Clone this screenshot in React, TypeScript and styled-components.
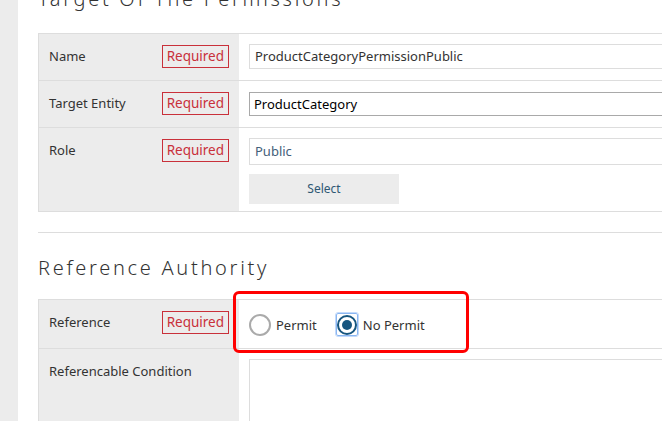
import styled, { createGlobalStyle } from "styled-components";

const GlobalStyle = createGlobalStyle`
  html, body {
    margin: 0;
    padding: 0;
    background: #ffffff;
    font-family: "Noto Sans", "Open Sans", sans-serif;
    color: #333333;
  }
  * {
    box-sizing: border-box;
  }
`;

type Field = {
  label: string;
  required?: boolean;
};

function App() {
  return (
    <>
      <GlobalStyle />
      <Page>
        <Sidebar />
        <Main>
          <SectionTitle $first>Target Of The Permissions</SectionTitle>
          <FormTable>
            <FormRow>
              <LabelCell label="Name" required />
              <ValueCell>
                <TextInput>ProductCategoryPermissionPublic</TextInput>
              </ValueCell>
            </FormRow>
            <FormRow>
              <LabelCell label="Target Entity" required />
              <ValueCell>
                <TextInput $variant="select">ProductCategory</TextInput>
              </ValueCell>
            </FormRow>
            <FormRow $last>
              <LabelCell label="Role" required />
              <ValueCell $tight>
                <TextInput $variant="readonly">Public</TextInput>
                <SelectButton>Select</SelectButton>
              </ValueCell>
            </FormRow>
          </FormTable>

          <Divider />

          <SectionTitle>Reference Authority</SectionTitle>
          <FormTable>
            <FormRow>
              <LabelCell label="Reference" required />
              <ValueCell>
                <RadioGroup>
                  <RadioOption>
                    <Radio />
                    Permit
                  </RadioOption>
                  <RadioOption>
                    <Focus>
                      <Radio $checked />
                    </Focus>
                    No Permit
                  </RadioOption>
                </RadioGroup>
                <Highlight />
              </ValueCell>
            </FormRow>
            <FormRow $last>
              <LabelCell label="Referencable Condition" />
              <ValueCell>
                <TextArea />
              </ValueCell>
            </FormRow>
          </FormTable>
        </Main>
      </Page>
    </>
  );
}

function LabelCell({ label, required }: Field) {
  return (
    <Label>
      <span>{label}</span>
      {required && <RequiredBadge>Required</RequiredBadge>}
    </Label>
  );
}

export default App;

const Page = styled.div`
  display: flex;
  width: 662px;
  height: 421px;
  overflow: hidden;
`;

const Sidebar = styled.div`
  flex: 0 0 18px;
  background: #ececec;
`;

const Main = styled.div`
  flex: 1;
  padding-left: 20px;
  overflow: hidden;
`;

const SectionTitle = styled.h2<{ $first?: boolean }>`
  margin: ${(p) => (p.$first ? "-13px 0 22px" : "23px 0 19px")};
  font-size: 20px;
  line-height: 24px;
  font-weight: 300;
  letter-spacing: 2.7px;
  color: #333333;
  white-space: nowrap;
`;

const FormTable = styled.div`
  width: 700px;
  border: 1px solid #dddddd;
  border-right: none;
`;

const FormRow = styled.div<{ $last?: boolean }>`
  display: grid;
  grid-template-columns: 200px 1fr;
  border-bottom: ${(p) => (p.$last ? "none" : "1px solid #dddddd")};
`;

const Label = styled.div`
  display: flex;
  justify-content: space-between;
  align-items: flex-start;
  background: #ececec;
  padding: 10px 10px 11px 10px;
  font-size: 13px;
  line-height: 25px;
  color: #333333;
`;

const RequiredBadge = styled.span`
  margin-top: 1px;
  height: 23px;
  padding: 0 4px;
  border: 1px solid #c9303a;
  color: #c9303a;
  font-size: 13.5px;
  line-height: 21px;
`;

const ValueCell = styled.div<{ $tight?: boolean }>`
  position: relative;
  display: flex;
  flex-direction: column;
  align-items: flex-start;
  gap: 9px;
  padding: 10px 10px ${(p) => (p.$tight ? "7px" : "8px")} 10px;
`;

const TextInput = styled.div<{ $variant?: "select" | "readonly" }>`
  width: 100%;
  height: ${(p) => (p.$variant === "readonly" ? "27px" : p.$variant === "select" ? "24px" : "25px")};
  margin-top: ${(p) => (p.$variant === "select" ? "1px" : "0")};
  border: 1px solid ${(p) => (p.$variant === "select" ? "#a9a9a9" : "#dddddd")};
  padding: 0 ${(p) => (p.$variant === "select" ? "4px" : "5px")};
  font-size: 13px;
  line-height: ${(p) => (p.$variant === "readonly" ? "25px" : p.$variant === "select" ? "22px" : "23px")};
  color: ${(p) => (p.$variant === "select" ? "#000000" : p.$variant === "readonly" ? "#43607a" : "#333333")};
  background: #ffffff;
`;

const SelectButton = styled.div`
  width: 150px;
  height: 30px;
  background: #ececec;
  color: #2f5874;
  font-size: 12px;
  line-height: 30px;
  text-align: center;
`;

const Divider = styled.div`
  margin-top: 20px;
  height: 1px;
  width: 700px;
  background: #dddddd;
`;

const RadioGroup = styled.div`
  display: flex;
  align-items: center;
  gap: 19px;
  height: 27px;
  margin-top: 1px;
  margin-bottom: 2px;
  font-size: 13px;
  color: #333333;
`;

const RadioOption = styled.label`
  display: flex;
  align-items: center;
  gap: 5px;
`;

const Radio = styled.span<{ $checked?: boolean }>`
  position: relative;
  display: block;
  width: ${(p) => (p.$checked ? "20px" : "22px")};
  height: ${(p) => (p.$checked ? "20px" : "22px")};
  border-radius: 50%;
  border: 2px solid ${(p) => (p.$checked ? "#16557f" : "#aaaaaa")};
  background: #ffffff;

  &::after {
    content: "";
    display: ${(p) => (p.$checked ? "block" : "none")};
    position: absolute;
    left: 3px;
    top: 3px;
    width: 10px;
    height: 10px;
    border-radius: 50%;
    background: #16557f;
  }
`;

const Focus = styled.span`
  display: flex;
  align-items: center;
  justify-content: center;
  width: 22px;
  height: 23px;
  border: 1px solid #8ab6f2;
  outline: 1px solid #c3dafa;
  border-radius: 2px;
`;

const Highlight = styled.div`
  position: absolute;
  left: -6px;
  top: -9px;
  width: 236px;
  height: 62px;
  border: 3px solid #ff0000;
  border-radius: 6px;
  pointer-events: none;
`;

const TextArea = styled.div`
  width: 100%;
  height: 120px;
  border: 1px solid #dddddd;
  background: #ffffff;
`;
